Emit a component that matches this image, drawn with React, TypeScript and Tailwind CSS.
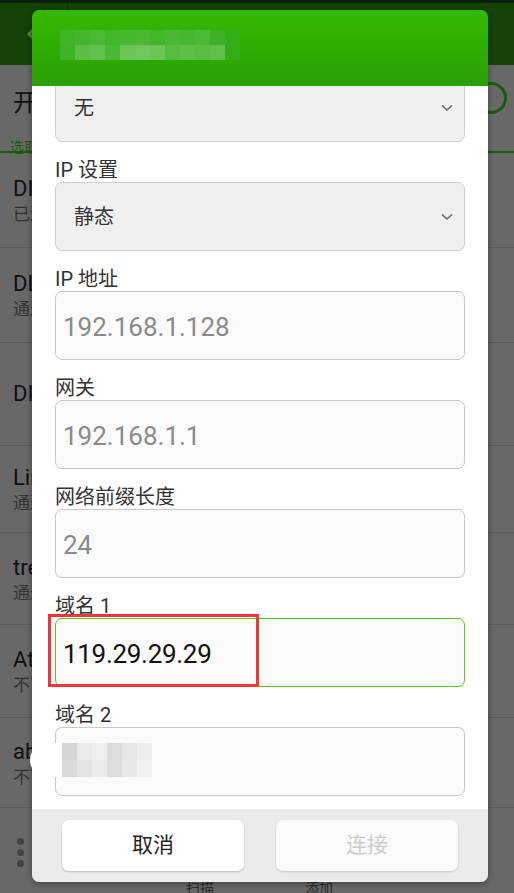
import React from "react";

const font = { fontFamily: '"Roboto", "Noto Sans CJK SC", sans-serif' };

type Row = { title: string; sub?: string; h: string };

const rows: Row[] = [
  { title: "DIRECT-5C", sub: "已连接", h: "h-[95px]" },
  { title: "DL-WIFI", sub: "通过 WPA2 进行保护", h: "h-[95px]" },
  { title: "DIR-612", h: "h-[103px]" },
  { title: "Link_2F", sub: "通过 WPA2 进行保护", h: "h-[87px]" },
  { title: "tree", sub: "通过 WPA 进行保护", h: "h-[92px]" },
  { title: "At", sub: "不可用", h: "h-[93px]" },
  { title: "ab", sub: "不可用", h: "h-[90px]" },
];

const titleBlocks = [
  ["#3fb426", "#45b52e", "#4cb935", "#42b52a", "#46b830", "#4ab832", "#43b52b", "#4ab834", "#45b72e", "#4db936", "#3fb027", "#34ad16"],
  ["#3fb228", "#5cbd45", "#62c04c", "#4ab835", "#6ec557", "#70c65a", "#6cc455", "#56bc3f", "#5dbf46", "#58bd42", "#60bf4a", "#36ac18"],
];

const dnsBlocks = [
  ["#d6d6d6", "#ebebeb", "#efefef", "#dcdcdc", "#e6e6e6", "#eeeeee"],
  ["#dadada", "#e4e4e4", "#ececec", "#dddddd", "#e8e8e8", "#f2f2f2"],
];

function Chevron() {
  return (
    <svg width="12" height="8" viewBox="0 0 12 8" className="shrink-0">
      <path d="M1 1.5 L6 6 L11 1.5" fill="none" stroke="#666" strokeWidth="1.6" />
    </svg>
  );
}

function Label({ text }: { text: string }) {
  return <div className="mt-[16px] h-[24px] text-[20px] leading-[24px] text-[#333]">{text}</div>;
}

function SelectBox({ value }: { value: string }) {
  return (
    <div className="flex h-[69px] items-center justify-between rounded-[7px] border border-[#d0d0d0] bg-[#efefef] pl-[18px] pr-[11px] text-[20px] text-[#333]">
      <span>{value}</span>
      <Chevron />
    </div>
  );
}

function InputBox({ value, children }: { value: string; children?: React.ReactNode }) {
  return (
    <div className="relative flex h-[69px] items-center rounded-[7px] border border-[#c9c9c9] bg-[#fafafa] pl-[7px] pt-[3px] text-[26px] text-[#8a8a8a]">
      {value}
      {children}
    </div>
  );
}

export default function App() {
  return (
    <div className="relative h-[893px] w-[514px] overflow-hidden bg-[#686868]" style={font}>
      {/* app behind the dialog */}
      <div className="h-[3px] bg-[#0d1f07]" />
      <div className="flex h-[62px] items-center bg-[#164208]">
        <svg width="14" height="22" viewBox="0 0 14 22" className="ml-[26px]">
          <path d="M11 3 L3 11 L11 19" fill="none" stroke="#5a7a50" strokeWidth="3" />
        </svg>
        <div className="ml-[27px] h-full w-px bg-[#0f3005]" />
      </div>
      <div className="relative h-[88px] border-b-2 border-[#1b5a0c]">
        <div className="pl-[13px] pt-[20px] text-[24px] text-[#111]">开启 WLAN</div>
        <div className="pl-[10px] pt-[16px] text-[14px] text-[#1e5e10]">选取附近的 WLAN</div>
        <div className="absolute right-[7px] top-[17px] h-[32px] w-[32px] rounded-full border-[3px] border-[#1b5a0c]" />
      </div>
      {rows.map((r) => (
        <div key={r.title} className={`flex flex-col justify-center border-b border-[#5b5b5b] pl-[13px] ${r.h}`}>
          <div className="text-[22px] leading-[26px] text-[#111]">{r.title}</div>
          {r.sub && <div className="mt-[2px] text-[17px] leading-[20px] text-[#333]">{r.sub}</div>}
        </div>
      ))}
      <div className="relative h-[83px]">
        <div className="absolute left-[17px] top-[30px] flex flex-col gap-[4px]">
          <span className="h-[7px] w-[7px] rounded-full bg-[#444]" />
          <span className="h-[7px] w-[7px] rounded-full bg-[#444]" />
          <span className="h-[7px] w-[7px] rounded-full bg-[#444]" />
        </div>
        <div className="absolute left-[186px] top-[70px] text-[14px] text-[#2a2a2a]">扫描</div>
        <div className="absolute left-[305px] top-[70px] text-[14px] text-[#2a2a2a]">添加</div>
      </div>

      {/* dialog */}
      <div className="absolute left-[32px] top-[10px] flex w-[456px] flex-col rounded-[7px] shadow-[0_2px_6px_rgba(0,0,0,0.35)]">
        <div className="relative z-10 h-[76px] rounded-t-[7px] bg-gradient-to-b from-[#35b900] to-[#2a9f05] pl-[28px] pt-[20px]">
          {titleBlocks.map((row, i) => (
            <div key={i} className="flex">
              {row.map((c, j) => (
                <span key={j} className="h-[15px] w-[15px]" style={{ background: c }} />
              ))}
            </div>
          ))}
        </div>
        <div className="bg-white px-[23px] pb-[13px]">
          <div className="mt-[-13px]">
            <SelectBox value="无" />
            <Label text="IP 设置" />
            <SelectBox value="静态" />
            <Label text="IP 地址" />
            <InputBox value="192.168.1.128" />
            <Label text="网关" />
            <InputBox value="192.168.1.1" />
            <Label text="网络前缀长度" />
            <InputBox value="24" />
            <Label text="域名 1" />
            <div className="relative flex h-[69px] items-center rounded-[7px] border border-[#5fc21a] bg-[#fafafa] pl-[7px] pt-[3px] text-[26px] tracking-[-0.3px] text-[#111]">
              119.29.29.29
              <div className="absolute left-[-8px] top-[-5px] h-[73px] w-[211px] border-[3px] border-[#ee3838]" />
            </div>
            <Label text="域名 2" />
            <InputBox value="">
              <div className="absolute left-[-26px] top-[15px] flex items-center">
                <span className="h-[34px] w-[32px] rounded-l-full bg-white" />
                <div className="flex flex-col">
                  {dnsBlocks.map((row, i) => (
                    <div key={i} className="flex">
                      {row.map((c, j) => (
                        <span key={j} className="h-[17px] w-[15px]" style={{ background: c }} />
                      ))}
                    </div>
                  ))}
                </div>
              </div>
            </InputBox>
          </div>
        </div>
        <div className="flex h-[73px] items-center gap-[32px] rounded-b-[7px] bg-[#ebebeb] px-[30px]">
          <button className="flex h-[51px] w-[182px] items-center justify-center rounded-[7px] bg-white text-[21px] text-[#222] shadow-[0_1px_2px_rgba(0,0,0,0.2)]">
            取消
          </button>
          <button className="flex h-[51px] w-[182px] items-center justify-center rounded-[7px] bg-[#fafafa] text-[21px] text-[#cccccc] shadow-[0_1px_2px_rgba(0,0,0,0.15)]">
            连接
          </button>
        </div>
      </div>
    </div>
  );
}
